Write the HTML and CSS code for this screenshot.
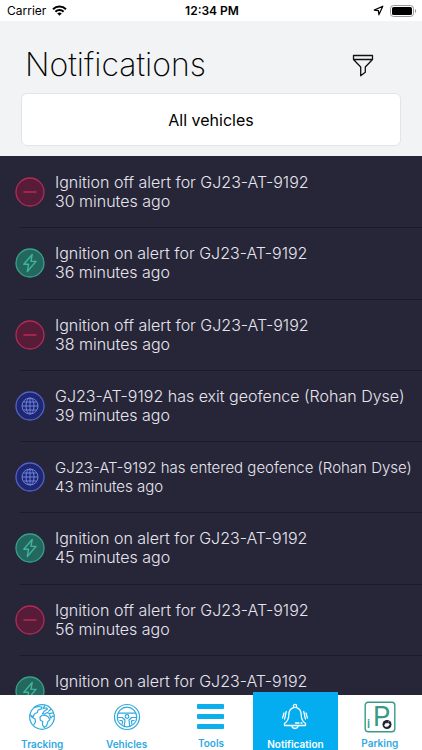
FILE: index.html
```html
<!DOCTYPE html>
<html lang="en">
<head>
  <meta charset="UTF-8" />
  <meta name="viewport" content="width=device-width, initial-scale=1.0"/>
  <title>Notifications</title>
  <link rel="stylesheet" href="styles.css">
</head>
<body>
  <!-- shared icons -->
  <svg class="sprite" aria-hidden="true">
    <symbol id="off" viewBox="0 0 30 30">
      <circle cx="15" cy="15" r="14" fill="#561c38" stroke="#b42a58" stroke-width="1.3"/>
      <path d="M8.5 15h13" stroke="#c22b58" stroke-width="1.4"/>
    </symbol>
    <symbol id="on" viewBox="0 0 30 30">
      <circle cx="15" cy="15" r="14" fill="#24675f" stroke="#35a38b" stroke-width="1.3"/>
      <path d="M17.2 6.5L8.8 16.2h4.8l-1.3 7.3 8.7-10.1h-5z" fill="none" stroke="#3cb79b" stroke-width="1.4" stroke-linejoin="round"/>
    </symbol>
    <symbol id="geo" viewBox="0 0 30 30">
      <circle cx="15" cy="15" r="14" fill="#1d2870" stroke="#5361cb" stroke-width="1.3"/>
      <g fill="none" stroke="#7180e0" stroke-width="1">
        <circle cx="15" cy="15" r="8"/>
        <ellipse cx="15" cy="15" rx="4" ry="8"/>
        <path d="M15 7v16M7 15h16M8.5 11h13M8.5 19h13"/>
      </g>
    </symbol>
  </svg>

  <div class="app">
    <div class="status-bar">
      <div class="carrier">
        Carrier
        <svg width="15" height="11" viewBox="0 0 15 11" fill="none" stroke="#000" stroke-width="2">
          <path d="M1 4.2a9.3 9.3 0 0 1 13 0M3.4 6.7a5.9 5.9 0 0 1 8.2 0"/>
          <path d="M7.5 10.8L5.2 8.5a3.4 3.4 0 0 1 4.6 0z" fill="#000" stroke="none"/>
        </svg>
      </div>
      <div class="time">12:34 PM</div>
      <div class="indicators">
        <svg width="11" height="11" viewBox="0 0 11 11" fill="none" stroke="#000" stroke-width="1.2" stroke-linejoin="round">
          <path d="M9.8 1.2L1.2 5.1l4.2.5.5 4.2z"/>
        </svg>
        <svg width="27" height="12" viewBox="0 0 27 12">
          <rect x=".5" y=".5" width="23" height="11" rx="3" fill="none" stroke="#999"/>
          <rect x="2" y="2" width="20" height="8" rx="1.6"/>
          <path d="M25 4v4c1.6-.6 1.6-3.4 0-4z" fill="#999"/>
        </svg>
      </div>
    </div>

    <header>
      <div class="title-row">
        <h1>Notifications</h1>
        <button class="filter" aria-label="Filter">
          <svg width="22" height="23" viewBox="0 0 22 23" fill="none" stroke="#111" stroke-width="1.3" stroke-linejoin="round">
            <path d="M1.5 1.5h19v4h-19zM1.5 5.5L8.7 13v8.8l4.6-3.6V13l7.2-7.5"/>
          </svg>
        </button>
      </div>
      <button class="vehicles">All vehicles</button>
    </header>

    <main>
      <ul class="alerts">
        <li><svg class="badge"><use href="#off"/></svg><p>Ignition off alert for GJ23-AT-9192<br>30 minutes ago</p></li>
        <li><svg class="badge"><use href="#on"/></svg><p>Ignition on alert for GJ23-AT-9192<br>36 minutes ago</p></li>
        <li><svg class="badge"><use href="#off"/></svg><p>Ignition off alert for GJ23-AT-9192<br>38 minutes ago</p></li>
        <li><svg class="badge"><use href="#geo"/></svg><p>GJ23-AT-9192 has exit geofence (Rohan Dyse)<br>39 minutes ago</p></li>
        <li><svg class="badge"><use href="#geo"/></svg><p class="long">GJ23-AT-9192 has entered geofence (Rohan Dyse)<br>43 minutes ago</p></li>
        <li><svg class="badge"><use href="#on"/></svg><p>Ignition on alert for GJ23-AT-9192<br>45 minutes ago</p></li>
        <li><svg class="badge"><use href="#off"/></svg><p>Ignition off alert for GJ23-AT-9192<br>56 minutes ago</p></li>
        <li><svg class="badge"><use href="#on"/></svg><p>Ignition on alert for GJ23-AT-9192</p></li>
      </ul>
    </main>

    <nav>
      <a href="#">
        <svg width="28" height="28" viewBox="0 0 28 28" fill="none" stroke="#31a9df" stroke-width="1.2" stroke-linejoin="round">
          <circle cx="14" cy="14" r="12.3"/>
          <path d="M6 4.8l4-1.3 4 .5-1 2.2-3 .8-.5 2.5-3 1.2-1.3 3-2.6-1.3M2 11.5l2.2 3 2.8 1.3.5 3-1.7 3.2M17 2.3l-2 3.4 3-1 1.5 1.2-3 2-2 2.6 2.2.5 2.6-1.5 2.2 1.2 3.4-.8M12 14l2.6-2 3.4.6 2.3 1.4 1.6 2.6-2 2-1.3 4.2-2.4 1.6-1.7-2.4.2-3.5-2.4-1.2zM21.5 11.5l1.3 3.6 1.6-2.1 1.8.5M23 6l-2.6 2.6"/>
        </svg>
        <span>Tracking</span>
      </a>
      <a href="#">
        <svg width="28" height="28" viewBox="0 0 28 28" fill="none" stroke="#31a9df" stroke-width="1.2" stroke-linejoin="round">
          <circle cx="14" cy="14" r="12.5"/>
          <circle cx="14" cy="14" r="9.8"/>
          <circle cx="14" cy="13.5" r="1.8"/>
          <path d="M5.2 10.2h17.6M4.3 14.5h5L12 17l-.8 6.3M23.7 14.5h-5L16 17l.8 6.3M6.5 17.5h2.2l.9 1-.5 3M21.5 17.5h-2.2l-.9 1 .5 3"/>
        </svg>
        <span>Vehicles</span>
      </a>
      <a href="#" class="round">
        <svg width="28" height="28" viewBox="0 0 28 28" fill="#0caeec">
          <rect x="0" y="1" width="27" height="5" rx="1"/>
          <rect x="0" y="11" width="27" height="5" rx="1"/>
          <rect x="0" y="21" width="27" height="5" rx="1"/>
        </svg>
        <span>Tools</span>
      </a>
      <a href="#" class="active">
        <svg width="28" height="28" viewBox="0 0 28 28" fill="none" stroke="#fff" stroke-width="1.3" stroke-linecap="round" stroke-linejoin="round">
          <circle cx="14" cy="3" r="1.6"/>
          <path d="M12.5 4.6C9 5.6 7.8 8.5 7.8 12c0 4-.8 6-4.3 8.5v2h21v-2c-3.5-2.5-4.3-4.5-4.3-8.5 0-3.5-1.2-6.4-4.7-7.4"/>
          <path d="M11 22.8c.2 3.600 5.800 3.600 6 0M14.5 20H18M20 20h1M5.300 8.500c-1 2.500-.6 4.500-1.800 7.500M3 10c-.7 2-.6 3-1.500 5M22.700 8.500c1 2.500.6 4.500 1.800 7.500M25 10c.7 2 .6 3 1.500 5"/>
        </svg>
        <span>Notification</span>
      </a>
      <a href="#" class="round">
        <svg class="parking" width="32" height="32" viewBox="0 0 32 32">
          <rect x="1.2" y="1.2" width="29.6" height="29.6" rx="3" fill="none" stroke="#369b87" stroke-width="1.4"/>
          <text x="9" y="25" class="p">P</text>
          <text x="3" y="27" class="i">i</text>
          <circle cx="23" cy="23.5" r="4.5" fill="#1c2230"/>
          <path d="M20.5 24.5l1-2 3-.3 1 1.6-1.8 1.8h-2.5zM24 21l1.5-1" fill="#fff" stroke="#fff" stroke-width=".5"/>
        </svg>
        <span>Parking</span>
      </a>
    </nav>
  </div>
</body>
</html>
```
FILE: styles.css
```css
* { box-sizing: border-box; }
body { margin: 0; font-family: Inter, "Liberation Sans", sans-serif; background: #272538; color: #000; }
button { font-family: inherit; color: inherit; cursor: pointer; }
.sprite { display: none; }
.app { display: flex; flex-direction: column; height: 100vh; }

.status-bar { display: grid; grid-template-columns: 1fr auto 1fr; align-items: center; height: 21px; padding: 0 5px 0 7px; background: #fff; font-size: 12px; }
.carrier { display: flex; align-items: center; gap: 6px; }
.time { font-weight: 600; }
.indicators { display: flex; align-items: center; justify-content: flex-end; gap: 6px; }

header { padding: 22px 21px 10px; background: #f2f3f5; }
.title-row { display: flex; align-items: center; justify-content: space-between; height: 44px; padding: 0 27px 0 4px; }
h1 { margin: 0; font-size: 32px; font-weight: 200; line-height: 44px; }
.filter { display: flex; padding: 0; border: none; background: none; }
.vehicles { display: block; width: 100%; height: 53px; margin-top: 6px; border: 1px solid #e3e4e7; border-radius: 6px; background: #fff; font-size: 16px; }

main { flex: 1; min-height: 0; overflow: hidden; background: #272538; }
.alerts { display: grid; grid-auto-rows: 1fr; height: 570px; margin: 0; padding: 0; list-style: none; }
.alerts li { display: flex; padding: 17px 0 0 15px; gap: 10px; }
.alerts li + li { background: linear-gradient(#1b192b, #1b192b) 20px 0 / 100% 1px no-repeat; }
.alerts p { margin: 0; color: #e6e5ee; font-size: 16px; font-weight: 300; line-height: 19px; white-space: nowrap; }
.alerts p.long { font-size: 15px; }
.badge { flex: none; width: 30px; height: 30px; margin-top: 4px; }

nav { display: flex; align-items: flex-end; height: 55px; background: #fff; }
nav a { display: flex; flex: 1; flex-direction: column; align-items: center; height: 55px; padding-top: 8px; color: #31a9df; font-size: 10px; font-weight: 600; line-height: 12px; text-decoration: none; }
nav a span { margin-top: 7px; }
nav a.active { height: 58px; padding-top: 11px; background: #04adef; color: #fff; }
nav a.round span { margin-top: 6px; }
nav svg.parking { margin: -2px 0; }
.p { fill: #369b87; font: 27px Roboto, sans-serif; }
.i { fill: #369b87; font: 500 12px Roboto, sans-serif; }
```
